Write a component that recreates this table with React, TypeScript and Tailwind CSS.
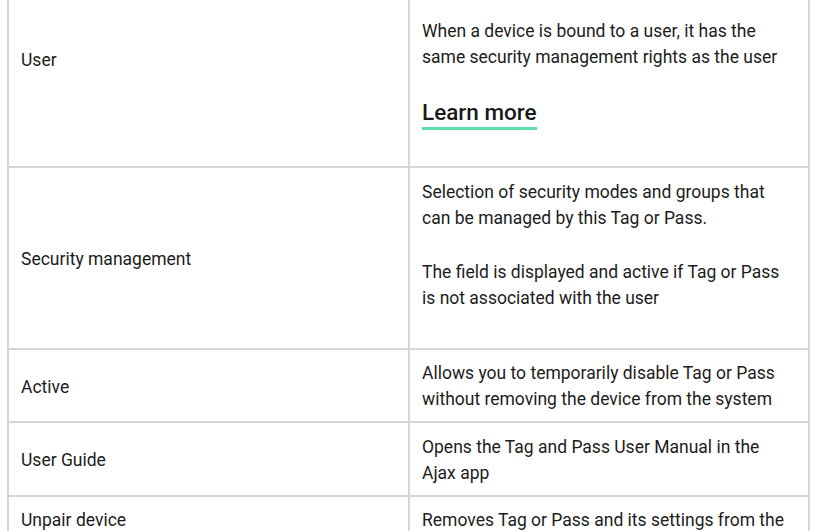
import React from "react";

const border = "border-[#d6d6d6]";

function Row({
  left,
  children,
  h,
  rightPad,
}: {
  left: string;
  children: React.ReactNode;
  h: string;
  rightPad: string;
}) {
  return (
    <div className={`flex ${h} border-b-2 ${border}`}>
      <div className="w-[399px] shrink-0 flex items-center px-3 pt-[2px]">
        <span>{left}</span>
      </div>
      <div className={`flex-1 border-l-2 ${border} px-3 ${rightPad}`}>{children}</div>
    </div>
  );
}

export default function App() {
  return (
    <div
      className="w-[816px] h-[531px] overflow-hidden bg-white text-[17.5px] leading-[26px] text-[#1c1c1c]"
      style={{ fontFamily: "Roboto, 'Noto Sans', sans-serif" }}
    >
      <div className={`ml-[7px] w-[803px] border-x-2 ${border}`}>
        <div className={`flex h-[168px] border-b-2 ${border}`}>
          <div className="w-[399px] shrink-0 px-3 pt-[47px]">
            <span>User</span>
          </div>
          <div className={`flex-1 border-l-2 ${border} px-3 pt-[18px]`}>
            <p>
              When a device is bound to a user, it has the same security management rights as the
              user
            </p>
            <div className="mt-[30px]">
              <span className="inline-block text-[22.5px] leading-[25px] font-medium text-[#1a1a1a] border-b-[3px] border-[#5ae0a6] pb-[2px]">
                Learn more
              </span>
            </div>
          </div>
        </div>
        <Row left="Security management" h="h-[182px]" rightPad="pt-[11px]">
          <p>Selection of security modes and groups that can be managed by this Tag or Pass.</p>
          <p className="mt-[28px]">
            The field is displayed and active if Tag or Pass is not associated with the user
          </p>
        </Row>
        <Row left="Active" h="h-[73px]" rightPad="pt-[10px]">
          <p>Allows you to temporarily disable Tag or Pass without removing the device from the system</p>
        </Row>
        <Row left="User Guide" h="h-[74px]" rightPad="pt-[11px]">
          <p>Opens the Tag and Pass User Manual in the Ajax app</p>
        </Row>
        <div className="flex h-[60px]">
          <div className="w-[399px] shrink-0 px-3 pt-[10px]">
            <span>Unpair device</span>
          </div>
          <div className={`flex-1 border-l-2 ${border} px-3 pt-[10px]`}>
            <p>Removes Tag or Pass and its settings from the hub</p>
          </div>
        </div>
      </div>
    </div>
  );
}
